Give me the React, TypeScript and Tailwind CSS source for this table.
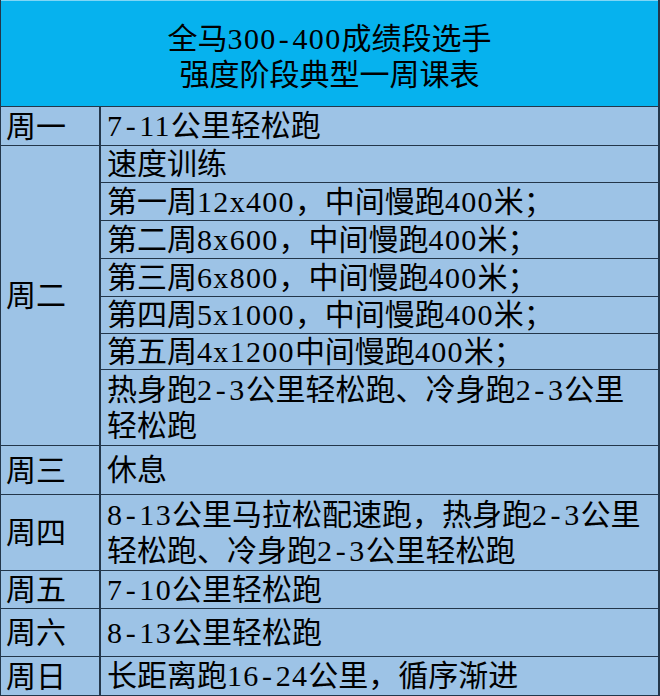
const rows: { day: string; h: number; items: { text: string[]; h: number }[] }[] = [
  { day: '周一', h: 39, items: [{ text: ['7-11公里轻松跑'], h: 39 }] },
  {
    day: '周二',
    h: 300,
    items: [
      { text: ['速度训练'], h: 37 },
      { text: ['第一周12x400，中间慢跑400米；'], h: 38 },
      { text: ['第二周8x600，中间慢跑400米；'], h: 38 },
      { text: ['第三周6x800，中间慢跑400米；'], h: 38 },
      { text: ['第四周5x1000，中间慢跑400米；'], h: 37 },
      { text: ['第五周4x1200中间慢跑400米；'], h: 36 },
      { text: ['热身跑2-3公里轻松跑、冷身跑2-3公里', '轻松跑'], h: 76 },
    ],
  },
  { day: '周三', h: 49, items: [{ text: ['休息'], h: 49 }] },
  {
    day: '周四',
    h: 76,
    items: [{ text: ['8-13公里马拉松配速跑，热身跑2-3公里', '轻松跑、冷身跑2-3公里轻松跑'], h: 76 }],
  },
  { day: '周五', h: 38, items: [{ text: ['7-10公里轻松跑'], h: 38 }] },
  { day: '周六', h: 48, items: [{ text: ['8-13公里轻松跑'], h: 48 }] },
  { day: '周日', h: 39, items: [{ text: ['长距离跑16-24公里，循序渐进'], h: 39 }] },
]

// latin runs are half-width in the sheet's font, so space them out a little
function Line({ text }: { text: string }) {
  const parts = text.split(/([0-9x-]+)/).filter(Boolean)
  return (
    <div>
      {parts.map((p, i) =>
        /^[0-9x-]+$/.test(p) ? (
          <span key={i} className="tracking-[1.3px]">
            {p.split('').map((c, j) =>
              c === '-' ? (
                <span key={j} className="inline-block w-[16px] text-center">
                  -
                </span>
              ) : (
                <span key={j}>{c}</span>
              ),
            )}
          </span>
        ) : (
          <span key={i}>{p}</span>
        ),
      )}
    </div>
  )
}

export default function App() {
  return (
    <div
      className="w-[660px] h-[696px] overflow-hidden bg-[#9dc3e6] text-black text-[30px] border-l border-r-2 border-[#23364a]"
      style={{ fontFamily: '"Liberation Serif", "Noto Sans CJK SC", serif' }}
    >
      {/* Title */}
      <div className="h-[107px] bg-[#06b2ee] border-t border-[#7fd6f6] border-b border-b-[#23364a] flex flex-col items-center justify-center pt-[6px] leading-[36px]">
        <Line text="全马300-400成绩段选手" />
        <Line text="强度阶段典型一周课表" />
      </div>

      {/* Week rows */}
      {rows.map((r) => (
        <div key={r.day} className="flex border-b border-[#23364a]" style={{ height: r.h }}>
          <div className="w-[100px] shrink-0 flex items-center pl-[5px] border-r-2 border-[#23364a]">
            {r.day}
          </div>
          <div className="flex-1 flex flex-col">
            {r.items.map((it, i) => (
              <div
                key={i}
                className={
                  'shrink-0 flex flex-col justify-center pl-[6px] leading-[36px] whitespace-nowrap' +
                  (i < r.items.length - 1 ? ' border-b border-[#23364a]' : '')
                }
                style={{ height: i < r.items.length - 1 ? it.h : it.h - 1 }}
              >
                {it.text.map((t) => (
                  <Line key={t} text={t} />
                ))}
              </div>
            ))}
          </div>
        </div>
      ))}
    </div>
  )
}
